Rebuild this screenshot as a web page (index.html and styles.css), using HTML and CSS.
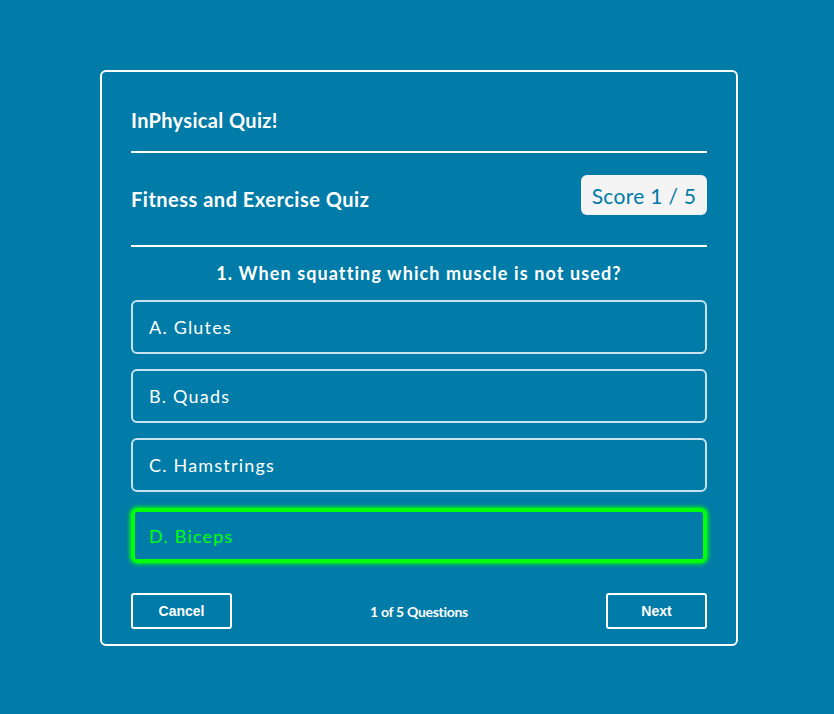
FILE: index.html
```html
<!DOCTYPE html>
<html>
<head>
<meta charset="utf-8">
<link rel="stylesheet" href="styles.css">
</head>
<body>
<div class="page">
  <div class="card">
    <h1 class="title">InPhysical Quiz!</h1>
    <hr class="rule">
    <div class="subhead">
      <h2 class="subtitle">Fitness and Exercise Quiz</h2>
      <div class="score">Score 1 / 5</div>
    </div>
    <hr class="rule">
    <p class="question">1. When squatting which muscle is not used?</p>
    <div class="options">
      <div class="option">A. Glutes</div>
      <div class="option">B. Quads</div>
      <div class="option">C. Hamstrings</div>
      <div class="option correct">D. Biceps</div>
    </div>
    <div class="footer">
      <button class="btn">Cancel</button>
      <span class="count">1 of 5 Questions</span>
      <button class="btn">Next</button>
    </div>
  </div>
</div>
</body>
</html>
```

FILE: styles.css
```css
* { box-sizing: border-box; }
html, body { margin: 0; padding: 0; }
body {
  background: #017ba7;
  font-family: "Lato", "Noto Sans", sans-serif;
  color: #fff;
  width: 834px;
  height: 714px;
}
.page {
  display: flex;
  justify-content: center;
  padding-top: 70px;
  padding-left: 4px;
}
.card {
  width: 638px;
  height: 576px;
  border: 2px solid #fff;
  border-radius: 6px;
  padding: 27px 29px 0;
  display: flex;
  flex-direction: column;
}
.title {
  margin: 0;
  font-size: 20px;
  font-weight: 700;
  letter-spacing: 0.35px;
  line-height: 42px;
  height: 52px;
}
.rule {
  margin: 0;
  border: 0;
  height: 2px;
  background: #fff;
}
.subhead {
  display: flex;
  justify-content: space-between;
  align-items: center;
  height: 92px;
}
.subtitle {
  margin: 0;
  font-size: 20px;
  font-weight: 700;
  letter-spacing: 0.5px;
}
.score {
  background: #f4f4f4;
  color: #017ba7;
  border-radius: 6px;
  width: 126px;
  height: 40px;
  display: flex;
  align-items: center;
  justify-content: center;
  font-size: 21px;
  letter-spacing: 0.3px;
  margin-top: -8px;
}
.question {
  margin: 0;
  text-align: center;
  font-size: 18px;
  font-weight: 700;
  letter-spacing: 1.1px;
  line-height: 22px;
  padding: 15px 0 16px;
}
.options {
  display: flex;
  flex-direction: column;
  gap: 15px;
}
.option {
  height: 54px;
  border: 2px solid #c9e3ee;
  border-radius: 6px;
  display: flex;
  align-items: center;
  padding-left: 16px;
  font-size: 18px;
  letter-spacing: 1.2px;
}
.option.correct {
  height: 55px;
  border: 4px solid #00ff0a;
  color: #00ff0a;
  box-shadow: 0 0 4px 1px #00ff0a;
  padding-left: 14px;
  margin-top: 1px;
}
.footer {
  display: flex;
  justify-content: space-between;
  align-items: center;
  margin-top: 30px;
}
.btn {
  width: 101px;
  height: 36px;
  background: transparent;
  border: 2px solid #fff;
  border-radius: 3px;
  color: #fff;
  font-family: "Liberation Sans", Arial, sans-serif;
  font-weight: 700;
  font-size: 14px;
}
.count {
  font-size: 14px;
  font-weight: 700;
  letter-spacing: -0.3px;
}
```
